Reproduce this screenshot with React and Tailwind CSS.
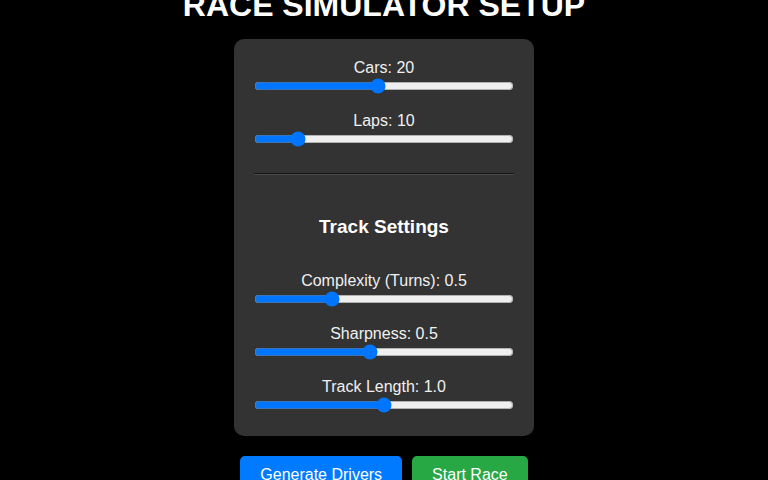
import React, { useState } from "react";

function Slider({ label, value, min, max, step, onChange, format }) {
  return (
    <div className="flex flex-col items-center mb-[18px] last:mb-0">
      <label className="text-base leading-[18px] text-[#f0f0f0]">
        {label}: {format ? format(value) : value}
      </label>
      <input
        type="range"
        min={min}
        max={max}
        step={step}
        value={value}
        onChange={(e) => onChange(Number(e.target.value))}
        className="block w-full h-4 mt-px m-0"
      />
    </div>
  );
}

export default function App() {
  const [cars, setCars] = useState(20);
  const [laps, setLaps] = useState(10);
  const [complexity, setComplexity] = useState(0.5);
  const [sharpness, setSharpness] = useState(0.5);
  const [length, setLength] = useState(1.0);
  const one = (v) => v.toFixed(1);

  return (
    <div className="h-screen overflow-hidden bg-black text-white flex flex-col items-center justify-center font-['Liberation_Sans',Arial,sans-serif]">
      <h1 className="text-[32px] font-bold leading-[37px] mb-[15px] shrink-0">
        RACE SIMULATOR SETUP
      </h1>

      <div className="w-[300px] shrink-0 bg-[#333333] rounded-[10px] px-5 pt-5 pb-[23px]">
        <Slider label="Cars" value={cars} min={2} max={40} step={1} onChange={setCars} />
        <Slider label="Laps" value={laps} min={3} max={50} step={1} onChange={setLaps} />

        <hr className="h-0 mt-[26px] border-t border-b border-t-[#151515] border-b-[#4a4a4a]" />

        <h3 className="mt-[41px] mb-[34px] text-center text-[19px] leading-[22px] font-bold">
          Track Settings
        </h3>

        <Slider label="Complexity (Turns)" value={complexity} min={0.1} max={1.5} step={0.1} onChange={setComplexity} format={one} />
        <Slider label="Sharpness" value={sharpness} min={0.1} max={1.0} step={0.1} onChange={setSharpness} format={one} />
        <Slider label="Track Length" value={length} min={0.5} max={1.5} step={0.1} onChange={setLength} format={one} />
      </div>

      <div className="flex gap-[10px] mt-5 shrink-0">
        <button className="bg-[#007bff] text-white text-base leading-[18px] px-5 py-[10px] rounded-[5px]">
          Generate Drivers
        </button>
        <button className="bg-[#28a745] text-white text-base leading-[18px] px-5 py-[10px] rounded-[5px]">
          Start Race
        </button>
      </div>
    </div>
  );
}
